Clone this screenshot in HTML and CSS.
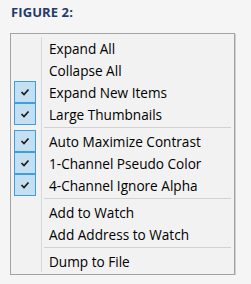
FILE: index.html
```html
<!DOCTYPE html>
<html>
<head>
<meta charset="utf-8">
<link rel="stylesheet" href="styles.css">
</head>
<body>
<div class="figure">
  <div class="fig-title">FIGURE 2:</div>
  <div class="menu">
    <div class="menu-list">
      <div class="item"><span class="icon"></span><span class="label">Expand All</span></div>
      <div class="item"><span class="icon"></span><span class="label">Collapse All</span></div>
      <div class="item"><span class="icon checked"><svg width="10" height="8" viewBox="0 0 10 8"><path d="M1.5 4 L4 6.5 L8.5 1.5" fill="none" stroke="#1a1a1a" stroke-width="1.7"/></svg></span><span class="label">Expand New Items</span></div>
      <div class="item"><span class="icon checked"><svg width="10" height="8" viewBox="0 0 10 8"><path d="M1.5 4 L4 6.5 L8.5 1.5" fill="none" stroke="#1a1a1a" stroke-width="1.7"/></svg></span><span class="label">Large Thumbnails</span></div>
      <div class="sep"></div>
      <div class="item"><span class="icon checked"><svg width="10" height="8" viewBox="0 0 10 8"><path d="M1.5 4 L4 6.5 L8.5 1.5" fill="none" stroke="#1a1a1a" stroke-width="1.7"/></svg></span><span class="label">Auto Maximize Contrast</span></div>
      <div class="item"><span class="icon checked"><svg width="10" height="8" viewBox="0 0 10 8"><path d="M1.5 4 L4 6.5 L8.5 1.5" fill="none" stroke="#1a1a1a" stroke-width="1.7"/></svg></span><span class="label">1-Channel Pseudo Color</span></div>
      <div class="item"><span class="icon checked"><svg width="10" height="8" viewBox="0 0 10 8"><path d="M1.5 4 L4 6.5 L8.5 1.5" fill="none" stroke="#1a1a1a" stroke-width="1.7"/></svg></span><span class="label">4-Channel Ignore Alpha</span></div>
      <div class="sep"></div>
      <div class="item"><span class="icon"></span><span class="label">Add to Watch</span></div>
      <div class="item"><span class="icon"></span><span class="label">Add Address to Watch</span></div>
      <div class="sep"></div>
      <div class="item"><span class="icon"></span><span class="label">Dump to File</span></div>
    </div>
  </div>
</div>
</body>
</html>
```
FILE: styles.css
```css
html, body {
  margin: 0;
  padding: 0;
  background: #f5f5f5;
}
.figure {
  padding: 5px 0 0 10px;
  font-family: "Open Sans", "Noto Sans", sans-serif;
}
.fig-title {
  font-weight: 700;
  font-size: 13px;
  line-height: 14px;
  letter-spacing: 0.1px;
  color: #233a6b;
  padding-left: 1px;
  height: 28px;
}
.menu {
  width: 219px;
  border: 1px solid #a3a3a3;
  box-shadow: 1px 1px 0 #cfcfcf;
  background: #f2f2f2;
  padding: 3px 2px 2px 2px;
}
.menu-list {
  display: flex;
  flex-direction: column;
  background-image: linear-gradient(#d7d7d7, #d7d7d7);
  background-repeat: no-repeat;
  background-size: 1px 100%;
  background-position: 28px 0;
}
.item {
  display: flex;
  align-items: center;
  height: 22px;
}
.icon {
  width: 22px;
  height: 22px;
  box-sizing: border-box;
  margin-left: 1px;
  display: flex;
  align-items: center;
  justify-content: center;
}
.icon.checked {
  background: #c3dff1;
  border: 1px solid #3e9ede;
}
.label {
  margin-left: 13px;
  font-size: 13.6px;
  color: #000;
  white-space: nowrap;
}
.sep {
  height: 1px;
  margin: 2px 1px 2px 31px;
  background: #d2d2d2;
}
```
